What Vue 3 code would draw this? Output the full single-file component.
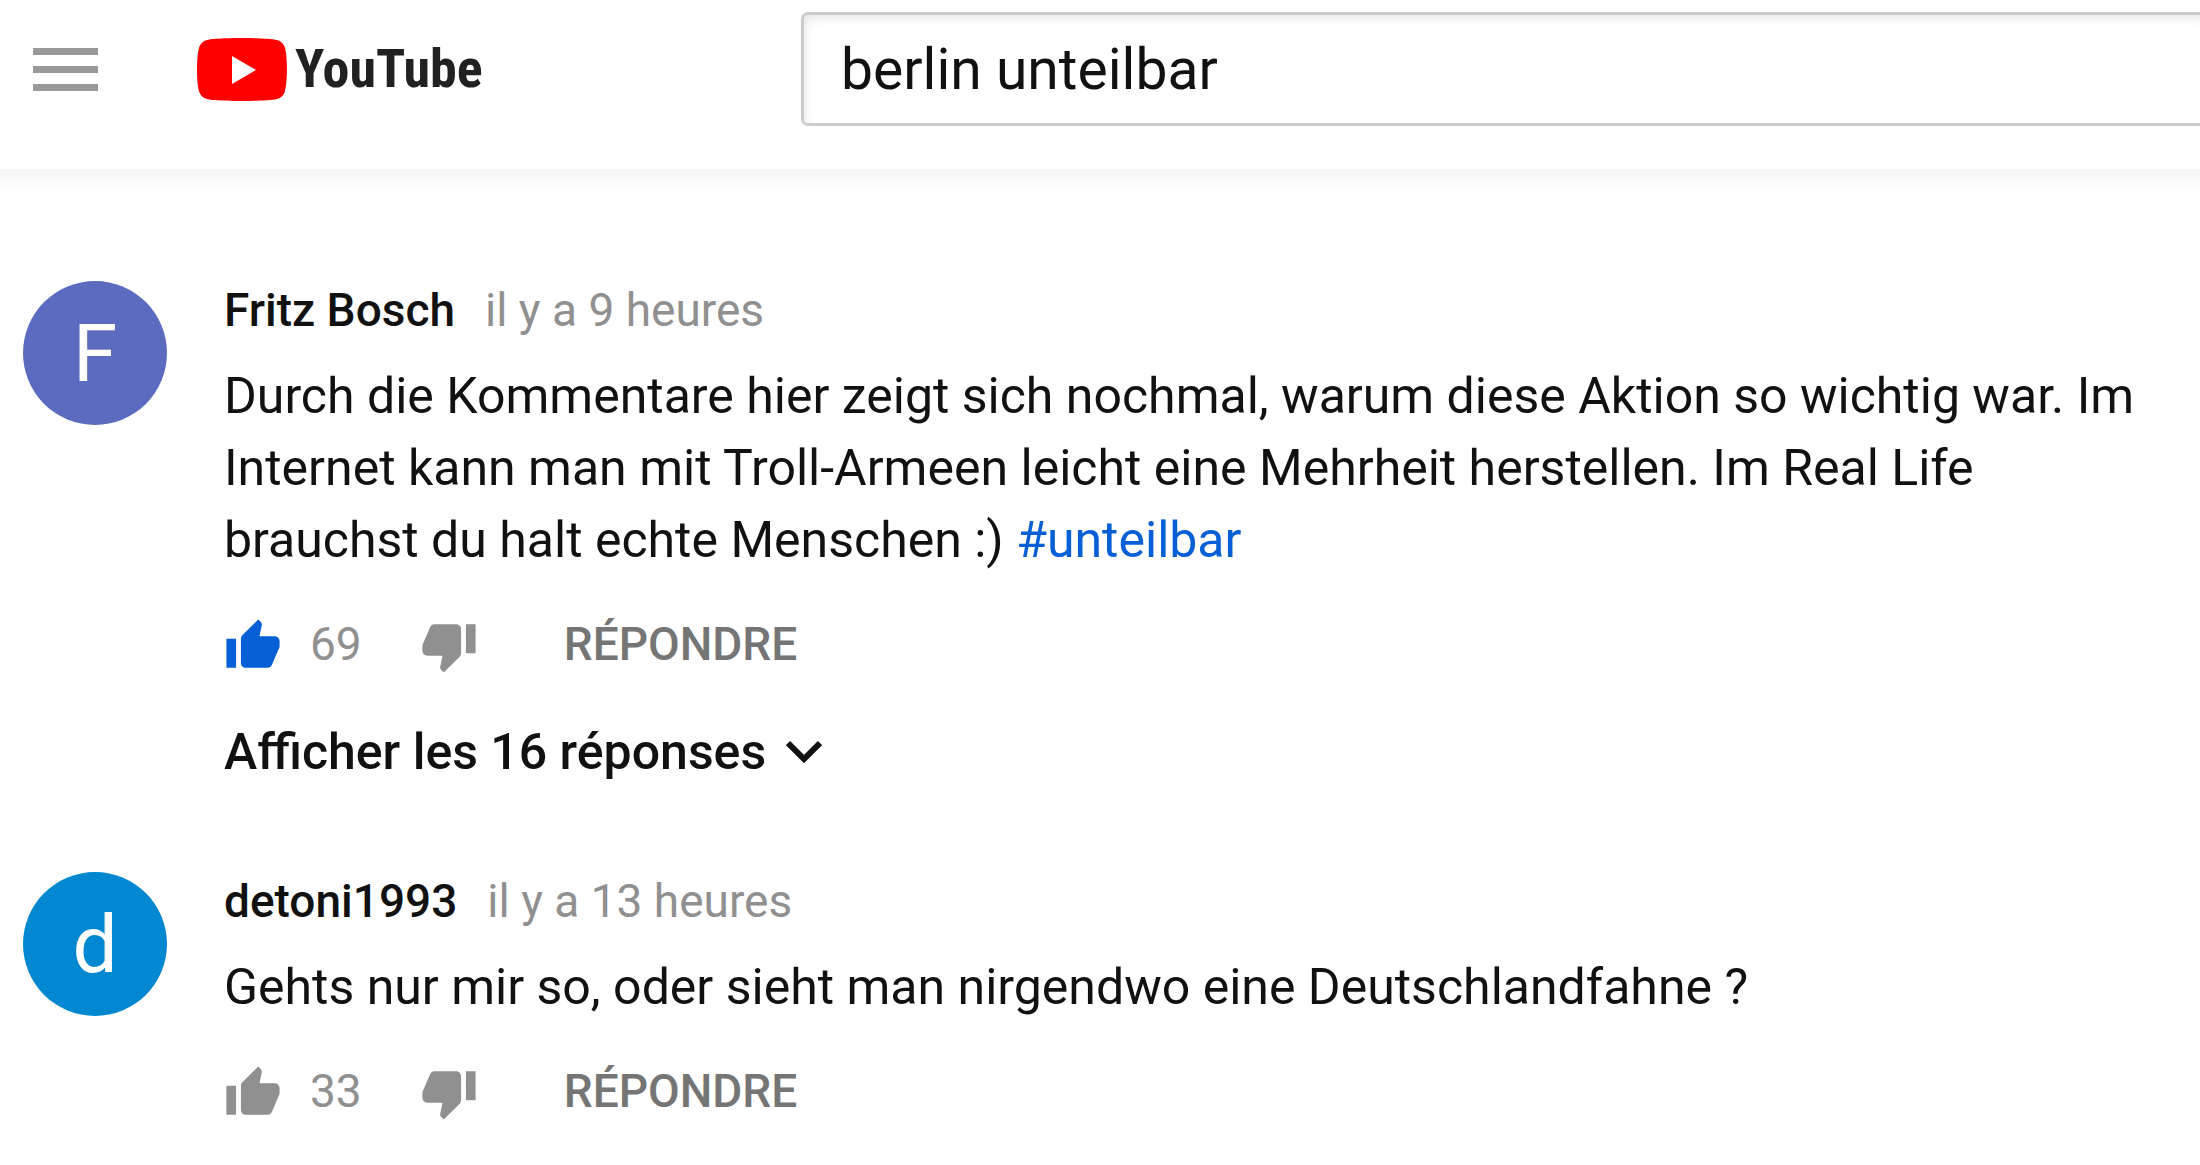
<script setup>
import { ref } from 'vue'

const search = ref('berlin unteilbar')

const comments = ref([
  {
    id: 1,
    author: 'Fritz Bosch',
    letter: 'F',
    color: 'indigo',
    time: 'il y a 9 heures',
    text: 'Durch die Kommentare hier zeigt sich nochmal, warum diese Aktion so wichtig war. Im Internet kann man mit Troll-Armeen leicht eine Mehrheit herstellen. Im Real Life brauchst du halt echte Menschen :)',
    hashtag: '#unteilbar',
    likes: 69,
    liked: true,
    replies: 16,
  },
  {
    id: 2,
    author: 'detoni1993',
    letter: 'd',
    color: 'blue',
    time: 'il y a 13 heures',
    text: 'Gehts nur mir so, oder sieht man nirgendwo eine Deutschlandfahne ?',
    hashtag: '',
    likes: 33,
    liked: false,
    replies: 0,
  },
])

function toggleLike(comment) {
  comment.liked = !comment.liked
  comment.likes += comment.liked ? 1 : -1
}
</script>

<template>
  <div class="page">
    <header class="header">
      <button class="menu" type="button" aria-label="Menu">
        <span></span>
        <span></span>
        <span></span>
      </button>
      <a class="logo" href="#">
        <svg class="logoIcon" viewBox="0 0 90 63" aria-hidden="true">
          <path fill="#f00" d="M88 10C87 6 84 3 80 2 73 0 45 0 45 0S17 0 10 2C6 3 3 6 2 10 0 17 0 31.5 0 31.5S0 46 2 53c1 4 4 7 8 8 7 2 35 2 35 2s28 0 35-2c4-1 7-4 8-8 2-7 2-21.500 2-21.500S90 17 88 10z" />
          <path fill="#fff" d="M35 18v28l24-14z" />
        </svg>
        <span class="logoText">YouTube</span>
      </a>
      <form class="search" @submit.prevent>
        <input v-model="search" class="searchInput" type="text" aria-label="Rechercher" spellcheck="false" />
      </form>
    </header>

    <main class="comments">
      <article v-for="comment in comments" :key="comment.id" class="comment">
        <div class="avatar" :class="comment.color">{{ comment.letter }}</div>
        <div class="content">
          <div class="meta">
            <a class="author" href="#">{{ comment.author }}</a>
            <a class="time" href="#">{{ comment.time }}</a>
          </div>
          <p class="text">
            {{ comment.text }}
            <a v-if="comment.hashtag" class="hashtag" href="#">{{ comment.hashtag }}</a>
          </p>
          <div class="actions">
            <button class="thumb" :class="{ active: comment.liked }" type="button" aria-label="J'aime" @click="toggleLike(comment)">
              <svg viewBox="0 0 24 24">
                <path d="M1 21h4V9H1v12zm22-11c0-1.100-.9-2-2-2h-6.310l.95-4.570.03-.32c0-.41-.17-.79-.44-1.060L14.170 1 7.590 7.590C7.220 7.950 7 8.450 7 9v10c0 1.100.9 2 2 2h9c.83 0 1.540-.5 1.840-1.220l3.020-7.050c.09-.23.14-.47.14-.73v-2z" />
              </svg>
            </button>
            <span class="count">{{ comment.likes }}</span>
            <button class="thumb" type="button" aria-label="Je n'aime pas">
              <svg viewBox="0 0 24 24">
                <path d="M15 3H6c-.83 0-1.540.5-1.840 1.220l-3.020 7.050c-.09.23-.14.47-.14.73v2c0 1.100.9 2 2 2h6.310l-.95 4.570-.03.32c0 .41.17.79.44 1.060L9.830 23l6.590-6.590c.36-.36.58-.86.58-1.410V5c0-1.100-.9-2-2-2zm4 0v12h4V3h-4z" />
              </svg>
            </button>
            <button class="reply" type="button">RÉPONDRE</button>
          </div>
          <button v-if="comment.replies" class="more" type="button">
            Afficher les {{ comment.replies }} réponses
            <svg class="chevron" viewBox="0 0 36 24" aria-hidden="true">
              <path d="M2 3l16 16L34 3" fill="none" stroke="currentColor" stroke-width="6" />
            </svg>
          </button>
        </div>
      </article>
    </main>
  </div>
</template>

<style>
body {
  margin: 0;
  background-color: #fff;
}
</style>

<style scoped>
.page {
  font-family: Roboto, "Liberation Sans", sans-serif;
  color: #111;
  overflow-x: hidden;
}

button {
  font-family: inherit;
  background: none;
  border: none;
  padding: 0;
  margin: 0;
  cursor: pointer;
}

a {
  color: inherit;
  text-decoration: none;
}

.header {
  display: flex;
  align-items: center;
  height: 138px;
  padding: 0 0 31px 33px;
  background-color: #fff;
  box-shadow: 0 4px 16px 8px rgba(0, 0, 0, 0.04);
}

.menu {
  display: flex;
  flex-direction: column;
  gap: 11px;
  width: 65px;
  margin-right: 99px;
}

.menu span {
  height: 7px;
  background-color: #999;
}

.logo {
  display: flex;
  align-items: center;
  gap: 8px;
  width: 604px;
  flex-shrink: 0;
}

.logoIcon {
  width: 90px;
  height: 63px;
}

.logoText {
  font-family: "Roboto Condensed", "Open Sans Condensed", Roboto, sans-serif;
  font-size: 54px;
  font-weight: 700;
  line-height: 64px;
  color: #212121;
}

.search {
  flex: 1;
  min-width: 0;
}

.searchInput {
  display: block;
  box-sizing: border-box;
  width: 100%;
  height: 114px;
  padding: 0 37px;
  border: 3px solid #ccc;
  border-right: none;
  border-radius: 7px 0 0 7px;
  box-shadow: inset 4px 6px 12px -4px #e4e4e4;
  outline: none;
  font-family: inherit;
  font-size: 57px;
  color: #111;
}

.comments {
  display: flex;
  flex-direction: column;
  gap: 81px;
  padding: 109px 40px 40px 23px;
}

.comment {
  display: flex;
  gap: 57px;
}

.avatar {
  flex-shrink: 0;
  width: 144px;
  height: 144px;
  margin-top: 3px;
  border-radius: 50%;
  font-size: 80px;
  line-height: 146px;
  text-align: center;
  color: #fff;
}

.indigo {
  background-color: #5c6bc0;
}

.blue {
  background-color: #0288d1;
}

.content {
  min-width: 0;
  flex: 1;
}

.meta {
  display: flex;
  gap: 30px;
  margin-bottom: 17px;
  font-size: 46px;
  line-height: 65px;
}

.author {
  font-weight: 500;
}

.time {
  color: #909090;
}

.text {
  margin: 0 0 41px;
  font-size: 50px;
  line-height: 72px;
}

.hashtag {
  color: #065fd4;
}

.actions {
  display: flex;
  align-items: flex-start;
  font-size: 46px;
  line-height: 54px;
}

.thumb {
  width: 58px;
  height: 58px;
  color: #909090;
}

.thumb svg {
  display: block;
  width: 58px;
  height: 58px;
  fill: currentColor;
}

.active {
  color: #065fd4;
}

.count {
  margin: 0 58px 0 28px;
  color: #909090;
}

.reply {
  margin-left: 86px;
  font-size: 46px;
  font-weight: 500;
  line-height: 54px;
  color: #757575;
}

.more {
  display: flex;
  align-items: center;
  gap: 20px;
  margin-top: 41px;
  font-size: 50px;
  font-weight: 500;
  line-height: 72px;
  color: #111;
}

.chevron {
  width: 36px;
  height: 24px;
}
</style>
